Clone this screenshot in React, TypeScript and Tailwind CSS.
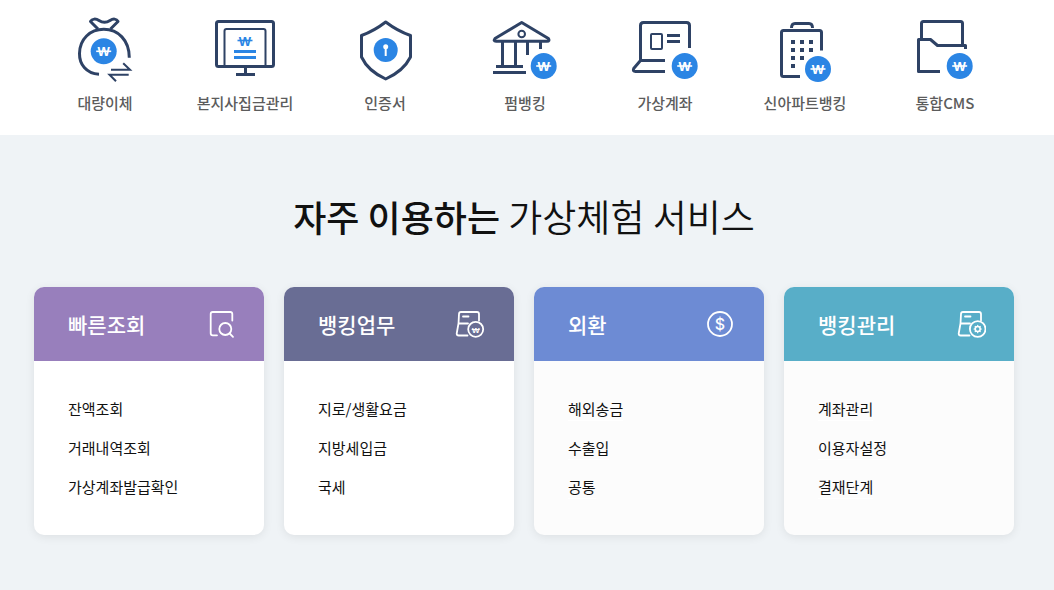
import React from 'react';

// --- ICONS ---

interface CoinProps {
    cx: number;
    cy: number;
}

// Won mark: a bold W with a single bar across it
const WonMark: React.FC<CoinProps & { color: string }> = ({ cx, cy, color }) => (
    <g>
        <text x={cx} y={cy + 5} textAnchor="middle" stroke="none" fill={color} className="font-['Liberation_Sans',sans-serif] text-[13px] font-bold">W</text>
        <path d={`M${cx - 7.5} ${cy} H${cx + 7.5}`} stroke={color} strokeWidth="1.6" />
    </g>
);

// Blue won coin shared by most of the menu icons
const WonCoin: React.FC<CoinProps> = ({ cx, cy }) => (
    <g>
        <circle cx={cx} cy={cy} r="13" fill="#2b85e4" stroke="none" />
        <WonMark cx={cx} cy={cy} color="#fff" />
    </g>
);

const MenuIcon: React.FC<{ children: React.ReactNode }> = ({ children }) => (
    <svg
        viewBox="0 0 80 80"
        className="h-20 w-20"
        fill="none"
        stroke="#2e4265"
        strokeWidth="3"
        strokeLinejoin="round"
        aria-hidden="true"
    >
        {children}
    </svg>
);

const TransferIcon = () => (
    <MenuIcon>
        <path d="M33 21 L25.5 13.5 C27 10.5 31 10.5 34 12.5 C37.5 14.8 41.5 14.8 45 12.5 C48 10.5 51.5 10.5 53 13.5 L45.5 21" />
        <path d="M34 66.3 C21 65.5 14.3 56 14.5 45.5 C14.7 31 25 21.3 38.8 21.3 C53 21.3 64.3 32 64.3 49.7" />
        <path d="M46 61.7 H65 L58.2 55.2 M63.7 66.7 H44.5 L51 73.3" strokeWidth="2" strokeLinejoin="miter" />
        <WonCoin cx={38.7} cy={43.3} />
    </MenuIcon>
);

const CollectIcon = () => (
    <MenuIcon>
        <rect x="11.5" y="13.5" width="57" height="45" rx="2" />
        <path d="M19.5 58 V23 Q19.5 21 21.5 21 H58.5 Q60.5 21 60.5 23 V58" strokeWidth="2" />
        <path d="M40.5 59 V66 M31 66.5 H50" />
        <path d="M29 43.5 H51 M29 49.5 H51" stroke="#2b85e4" />
        <WonMark cx={40} cy={32.5} color="#2b85e4" />
    </MenuIcon>
);

const CertificateIcon = () => (
    <MenuIcon>
        <path d="M40.7 14 Q29 23 16.5 27.5 V49 Q23 63 40.7 71 Q58.5 63 65.5 49 V27.5 Q52.5 23 40.7 14 Z" />
        <circle cx="40.7" cy="42" r="12" fill="#2b85e4" stroke="none" />
        <circle cx="40.7" cy="38.8" r="2.5" fill="#fff" stroke="none" />
        <path d="M40.7 39 V48" stroke="#fff" strokeWidth="2" />
    </MenuIcon>
);

const FirmBankingIcon = () => (
    <MenuIcon>
        <path d="M36.7 14.5 L10 30.5 Q8 33.3 11 33.3 H62 Q65 33.3 63.4 30.5 Z" />
        <circle cx="36.7" cy="26" r="3.3" strokeWidth="2" />
        <path d="M17.5 33 V58 M30.5 33 V58 M42.5 33 V47 M55.5 33 V41" />
        <path d="M11 58.5 H38 M8 64.5 H41" />
        <WonCoin cx={58.7} cy={58} />
    </MenuIcon>
);

const VirtualAccountIcon = () => (
    <MenuIcon>
        <path d="M64.5 40 V17.5 Q64.5 14.5 61.5 14.5 H18.5 Q15.5 14.5 15.5 17.5 V52.5 L8.7 60.5 Q7.5 63.5 10.5 63.5 H40 M15.5 52.5 H40" />
        <rect x="26" y="26" width="11" height="15" rx="1" strokeWidth="2" />
        <path d="M42 27.5 H55 M42 33.5 H55" />
        <WonCoin cx={59.7} cy={58} />
    </MenuIcon>
);

const ApartmentIcon = () => (
    <MenuIcon>
        <path d="M35 68.5 H18.5 Q16.5 68.5 16.5 66.5 V24.5 Q16.5 22.5 18.5 22.5 H54.5 Q56.5 22.5 56.5 24.5 V42.5" />
        <path d="M26.5 20 Q26.5 15.5 30 15.5 H44 Q47.5 15.5 47.5 20" />
        <path
            d="M26 34 H30 M35 34 H39 M44 34 H48 M26 42 H30 M35 42 H39 M44 42 H48 M26 50 H30 M35 50 H39 M26 58 H30"
            strokeWidth="4"
        />
        <WonCoin cx={53} cy={61} />
    </MenuIcon>
);

const CmsIcon = () => (
    <MenuIcon>
        <path d="M35 63.5 H13.5 V31.5 H25.5 L32.5 37.5 H60.5 V41" />
        <path d="M16.5 31 V15.5 Q16.5 13.5 18.5 13.5 H55.5 Q57.5 13.5 57.5 15.5 V37" />
        <WonCoin cx={54.7} cy={58} />
    </MenuIcon>
);

const CardIcon: React.FC<{ children: React.ReactNode }> = ({ children }) => (
    <svg
        viewBox="0 0 32 32"
        className="h-8 w-8"
        fill="none"
        stroke="#fff"
        strokeWidth="1.8"
        strokeLinecap="round"
        strokeLinejoin="round"
        aria-hidden="true"
    >
        {children}
    </svg>
);

const InquiryIcon = () => (
    <CardIcon>
        <path d="M28.3 12.5 V6 Q28.3 4 26.3 4 H8.7 Q6.7 4 6.7 6 V25.3 Q6.7 27.3 8.7 27.3 H13" />
        <circle cx="21.3" cy="21" r="6" />
        <path d="M25.7 25.5 L29 28.8" />
    </CardIcon>
);

const BankingIcon = () => (
    <CardIcon>
        <path d="M25 12.5 V6 Q25 4 23 4 H7 Q5 4 5 6 L4.5 15.5 L2.7 25.5 Q2.7 27.5 4.7 27.5 H13.5 M4.5 15.5 H14 M9 8.5 H14.5" />
        <circle cx="21.7" cy="21.3" r="7.5" />
        <text x="21.7" y="24.5" textAnchor="middle" stroke="none" fill="#fff" className="font-['Liberation_Sans',sans-serif] text-[8px] font-bold">W</text>
        <path d="M17.7 21.5 H25.7" strokeWidth="1" strokeLinecap="butt" />
    </CardIcon>
);

const ForeignExchangeIcon = () => (
    <CardIcon>
        <circle cx="16" cy="16" r="12" />
        <text x="16" y="21.5" textAnchor="middle" stroke="none" fill="#fff" className="font-['Inter',sans-serif] text-[16px] font-medium">$</text>
    </CardIcon>
);

const ManagementIcon = () => (
    <CardIcon>
        <path d="M27 12.5 V6 Q27 4 25 4 H9 Q7 4 7 6 L6.5 15.5 L4.7 25.5 Q4.7 27.5 6.7 27.5 H15.5 M6.5 15.5 H16 M11 8.5 H16.5" />
        <circle cx="23.7" cy="21" r="7.8" />
        <circle cx="23.7" cy="21" r="2.5" strokeWidth="1.6" />
        <path
            d="M23.7 17.3 V18 M23.7 24 V24.7 M20 21 H20.7 M26.7 21 H27.4 M21.2 18.5 L21.6 18.9 M25.8 23.1 L26.2 23.5 M21.2 23.5 L21.6 23.1 M25.8 18.9 L26.2 18.5"
            strokeWidth="1.2"
        />
    </CardIcon>
);

// --- DATA ---

const menus = [
    { label: '대량이체', Icon: TransferIcon },
    { label: '본지사집금관리', Icon: CollectIcon },
    { label: '인증서', Icon: CertificateIcon },
    { label: '펌뱅킹', Icon: FirmBankingIcon },
    { label: '가상계좌', Icon: VirtualAccountIcon },
    { label: '신아파트뱅킹', Icon: ApartmentIcon },
    { label: '통합CMS', Icon: CmsIcon },
];

const services = [
    {
        title: '빠른조회',
        Icon: InquiryIcon,
        head: 'bg-[#987fbc]',
        body: 'bg-white',
        links: ['잔액조회', '거래내역조회', '가상계좌발급확인'],
    },
    {
        title: '뱅킹업무',
        Icon: BankingIcon,
        head: 'bg-[#696d94]',
        body: 'bg-white',
        links: ['지로/생활요금', '지방세입금', '국세'],
    },
    {
        title: '외환',
        Icon: ForeignExchangeIcon,
        head: 'bg-[#6d8bd4]',
        body: 'bg-[#fcfcfc]',
        links: ['해외송금', '수출입', '공통'],
    },
    {
        title: '뱅킹관리',
        Icon: ManagementIcon,
        head: 'bg-[#58aec8]',
        body: 'bg-[#fcfcfc]',
        links: ['계좌관리', '이용자설정', '결재단계'],
    },
];

// --- MAIN ---

export default function App() {
    return (
        <div className="flex min-h-screen flex-col bg-[#eff3f6] font-['Noto_Sans_CJK_KR',sans-serif] text-[#111]">
            <nav className="bg-white pt-2 pr-[39px] pb-[21px] pl-[35px]">
                <ul className="grid grid-cols-7">
                    {menus.map(({ label, Icon }) => (
                        <li key={label}>
                            <a href="#" className="flex flex-col items-center gap-1">
                                <Icon />
                                <span className="text-[15px] leading-[22px] font-medium whitespace-nowrap text-[#5c5c5c]">{label}</span>
                            </a>
                        </li>
                    ))}
                </ul>
            </nav>

            <main className="pt-[54px] pr-10 pb-12 pl-[34px]">
                <h2 className="text-center text-[37px] leading-[54px] font-[350]">
                    <strong className="text-[36px] font-medium">자주 이용하는</strong> 가상체험 서비스
                </h2>

                <div className="mt-11 grid grid-cols-4 gap-5">
                    {services.map(({ title, Icon, head, body, links }) => (
                        <section key={title} className={`overflow-hidden rounded-[10px] shadow-[0_2px_10px_rgba(0,0,0,0.08)] ${body}`}>
                            <div className={`flex h-[74px] items-center justify-between pr-7 pl-[34px] text-white ${head}`}>
                                <h3 className="text-[21px] leading-8 font-medium">{title}</h3>
                                <Icon />
                            </div>
                            <ul className="flex flex-col items-start gap-4 px-[34px] pt-[37px] pb-9">
                                {links.map((link) => (
                                    <li key={link}>
                                        <a href="#" className="block border-b border-white text-[15px] leading-[22px]">{link}</a>
                                    </li>
                                ))}
                            </ul>
                        </section>
                    ))}
                </div>
            </main>
        </div>
    );
}
